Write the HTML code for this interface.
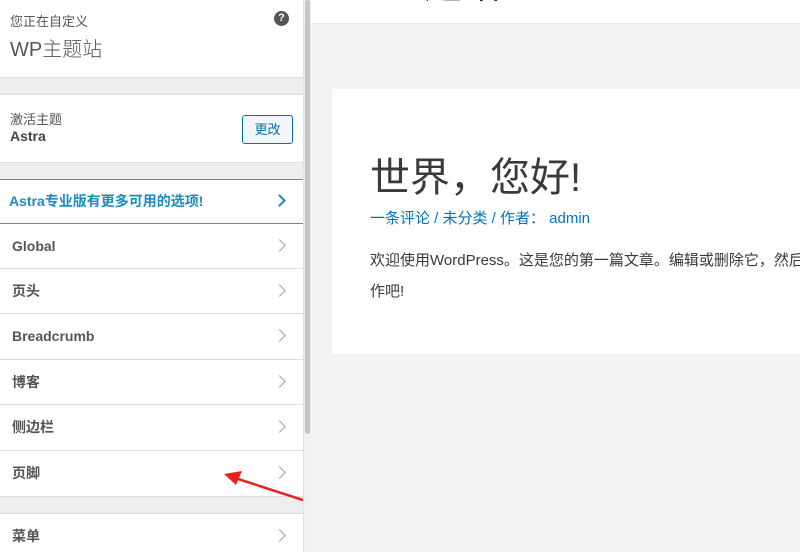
<!DOCTYPE html>
<html><head><meta charset="utf-8"><style>
*{margin:0;padding:0;box-sizing:border-box}
html,body{width:800px;height:552px;overflow:hidden}
body{position:relative;background:#f1f1f1;font-family:"Liberation Sans","Noto Sans CJK SC",sans-serif;color:#555}
#side{position:absolute;left:0;top:0;width:303px;height:552px;background:#eee;overflow:hidden}
.blk{position:absolute;left:0;width:303px;background:#fff;border-top:1px solid #ddd;border-bottom:1px solid #ddd}
.item{position:absolute;left:0;width:303px;height:45px;background:#fff;border-bottom:1px solid #ddd;font-size:14px;font-weight:bold;color:#555;padding:0 12px;line-height:44px}
.chev{position:absolute;right:19px;top:17px;width:9px;height:9px;border-right:1.5px solid #a0a5aa;border-top:1.5px solid #a0a5aa;transform:rotate(45deg)}
#track{position:absolute;left:303px;top:0;width:8px;height:552px;background:#f0f0f0;border-left:1px solid #e2e2e2}
#thumb{position:absolute;left:305px;top:0;width:5px;height:434px;background:#c6c6c6;border-radius:3px}
#prev{position:absolute;left:311px;top:0;width:489px;height:552px;background:#f3f3f3;overflow:hidden}
</style></head><body>
<div id="side">
 <div class="blk" style="top:-1px;height:79px;border-top:none">
  <div style="position:absolute;left:10px;top:12px;font-size:13px;color:#555">您正在自定义</div>
  <div style="position:absolute;left:10px;top:34px;font-size:20px;color:#555;font-weight:300">WP主题站</div>
  <div style="position:absolute;left:274px;top:12px;width:15px;height:15px;border-radius:50%;background:#555;color:#fff;font-size:11px;font-weight:bold;text-align:center;line-height:15px">?</div>
 </div>
 <div class="blk" style="top:94px;height:69px">
  <div style="position:absolute;left:10px;top:14px;font-size:13px">激活主题</div>
  <div style="position:absolute;left:10px;top:33px;font-size:14px;font-weight:bold;color:#444">Astra</div>
  <div style="position:absolute;left:242px;top:20px;width:51px;height:29px;border:1px solid #0073aa;border-radius:3px;background:#f3f5f6;color:#0073aa;font-size:13px;text-align:center;line-height:27px">更改</div>
 </div>
 <div class="item" style="top:179px;height:45px;border-top:1px solid #2e9fcf;border-bottom:1px solid #2e9fcf;color:#1e8cbe;padding-left:9px;line-height:42px">Astra专业版有更多可用的选项!<span class="chev" style="border-color:#1e8cbe;top:16px;border-width:2px"></span></div>
 <div class="item" style="top:224px">Global<span class="chev"></span></div>
 <div class="item" style="top:269px">页头<span class="chev"></span></div>
 <div class="item" style="top:314px;height:46px;line-height:45px">Breadcrumb<span class="chev"></span></div>
 <div class="item" style="top:360px">博客<span class="chev"></span></div>
 <div class="item" style="top:405px;height:46px;line-height:45px">侧边栏<span class="chev"></span></div>
 <div class="item" style="top:451px;height:46px;line-height:45px">页脚<span class="chev"></span></div>
 <div class="item" style="top:513px;height:40px;border-top:1px solid #ddd">菜单<span class="chev"></span></div>
 <svg style="position:absolute;left:220px;top:465px" width="90" height="40"><line x1="86" y1="36" x2="12" y2="12" stroke="#e8231f" stroke-width="2.5"/><polygon points="4,9 22,6 16,20" fill="#e8231f"/></svg>
</div>
<div id="track"></div><div id="thumb"></div>
<div id="prev">
 <div style="position:absolute;left:0;top:0;width:489px;height:24px;background:#fff;border-bottom:1px solid #e8e8e8;overflow:hidden">
  <div style="position:absolute;left:14px;top:-46px;font-size:38px;color:#333;white-space:nowrap">WP主题站</div>
 </div>
 <div style="position:absolute;left:21px;top:89px;width:468px;height:265px;background:#fff;overflow:hidden">
  <div style="position:absolute;left:38px;top:56px;font-size:40px;color:#3a3a3a;white-space:nowrap">世界，您好!</div>
  <div style="position:absolute;left:38px;top:118px;font-size:15px;color:#0274be;white-space:nowrap">一条评论 / 未分类 / 作者： admin</div>
  <div style="position:absolute;left:38px;top:156px;font-size:15px;color:#3a3a3a;line-height:31px;white-space:nowrap">欢迎使用WordPress。这是您的第一篇文章。编辑或删除它，然后开始写<br>作吧!</div>
 </div>
</div>
</body></html>
